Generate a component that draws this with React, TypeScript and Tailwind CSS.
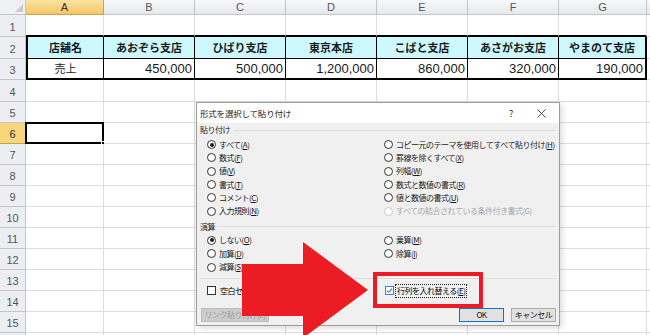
import type { ReactNode } from 'react';

const COLS: [string, number][] = [
  ['A', 78],
  ['B', 91],
  ['C', 91],
  ['D', 91],
  ['E', 91],
  ['F', 91],
  ['G', 88],
  ['', 100]
];

const ROW_HEIGHTS = [22, 22, 21, 22, 21, 21, 21, 21, 21, 21, 21, 21, 21, 21, 21, 21];

const STORES = ['店舗名', 'あおぞら支店', 'ひばり支店', '東京本店', 'こばと支店', 'あさがお支店', 'やまのて支店'];
const SALES = ['売上', '450,000', '500,000', '1,200,000', '860,000', '320,000', '190,000'];

const JP = "font-['Noto_Sans_CJK_JP','Noto_Sans',sans-serif]";

const Radio = ({ checked, disabled }: { checked?: boolean; disabled?: boolean }) => (
  <span
    className={`w-[9px] h-[9px] shrink-0 rounded-full border bg-white flex items-center justify-center ${
      disabled ? 'border-[#c8c8c8]' : 'border-[#333]'
    }`}
  >
    {checked && <span className="w-[4px] h-[4px] rounded-full bg-[#1a1a1a]" />}
  </span>
);

const Option = ({
  children,
  checked,
  disabled
}: {
  children: ReactNode;
  checked?: boolean;
  disabled?: boolean;
}) => (
  <div className={`h-[13.3px] flex items-center gap-[3px] whitespace-nowrap ${disabled ? 'text-[#a8a8a8]' : 'text-[#1a1a1a]'}`}>
    <Radio checked={checked} disabled={disabled} />
    <span>{children}</span>
  </div>
);

const Checkbox = ({ checked }: { checked?: boolean }) => (
  <span
    className={`w-[9px] h-[9px] shrink-0 border bg-white flex items-center justify-center ${
      checked ? 'border-[#3c7fd6]' : 'border-[#333]'
    }`}
  >
    {checked && (
      <svg width="7" height="7" viewBox="0 0 10 10">
        <path d="M1.5 5.2 L4 7.6 L8.6 2.4" fill="none" stroke="#2b6fd0" strokeWidth="1.5" />
      </svg>
    )}
  </span>
);

const GroupLabel = ({ text }: { text: string }) => (
  <div className="h-[14px] flex items-center gap-[3px] text-[#1a1a1a]">
    <span>{text}</span>
    <span className="flex-1 h-px bg-[#dedede]" />
  </div>
);

const Cell = ({ row, col, width }: { row: number; col: number; width: number }) => {
  const inTable = col < 7 && (row === 1 || row === 2);
  const aboveTable = col < 7 && row === 0;
  let cls = 'border-r border-b border-[#dadcdd]';
  if (aboveTable) cls = 'border-r border-r-[#dadcdd] border-b-2 border-b-black';
  if (inTable) {
    cls = `border-black ${row === 2 ? 'border-b-2' : 'border-b'} ${col === 6 ? 'border-r-2' : 'border-r'} ${col === 0 ? 'border-l-2' : ''}`;
  }
  const bg = inTable && row === 1 ? 'bg-[#ccf8fe]' : 'bg-white';
  let content: ReactNode = null;
  if (inTable && row === 1) {
    content = <span className={`w-full text-center font-bold text-[11px] ${JP}`}>{STORES[col]}</span>;
  } else if (inTable && row === 2) {
    content =
      col === 0 ? (
        <span className={`w-full text-center text-[11px] ${JP}`}>{SALES[col]}</span>
      ) : (
        <span className="w-full text-right pr-[2px] text-[13px] font-['Liberation_Sans',Arial,sans-serif]">{SALES[col]}</span>
      );
  }
  return (
    <div className={`relative box-border shrink-0 flex items-center ${cls} ${bg}`} style={{ width }}>
      {content}
      {row === 5 && col === 0 && (
        <div className="absolute -left-px -top-px w-[79px] h-[22px] border-2 border-black">
          <span className="absolute -right-[3px] -bottom-[3px] w-[4px] h-[4px] bg-black border border-white" />
        </div>
      )}
    </div>
  );
};

const Sheet = () => (
  <div className="flex flex-col text-[#1a1a1a]">
    <div className="h-[15px] flex shrink-0">
      <div className="w-[26px] shrink-0 bg-[#eef0f3] border-r border-b border-[#c3c5c8] relative">
        <svg className="absolute right-[2px] bottom-[2px]" width="8" height="8" viewBox="0 0 8 8">
          <path d="M8 0 L8 8 L0 8 Z" fill="#c9cbce" />
        </svg>
      </div>
      {COLS.map(([name, w], i) => (
        <div
          key={i}
          className={`shrink-0 flex items-center justify-center text-[11px] font-['Liberation_Sans',Arial,sans-serif] border-r border-b ${
            name === 'A'
              ? 'bg-gradient-to-b from-[#fbe3a2] to-[#f3c766] border-[#c9a24a] text-[#333]'
              : 'bg-gradient-to-b from-[#f8f9fa] to-[#e6e8eb] border-[#c3c5c8] text-[#555]'
          }`}
          style={{ width: w }}
        >
          {name}
        </div>
      ))}
    </div>
    {ROW_HEIGHTS.map((h, r) => (
      <div key={r} className="flex shrink-0" style={{ height: h }}>
        <div
          className={`w-[26px] shrink-0 flex items-end justify-center pb-[1px] text-[11px] font-['Liberation_Sans',Arial,sans-serif] border-r border-b ${
            r === 5 ? 'bg-[#f8d67c] border-[#c9a24a] text-[#333]' : 'bg-[#eceef1] border-[#c3c5c8] text-[#555]'
          }`}
        >
          {r < 15 ? r + 1 : ''}
        </div>
        {COLS.map(([, w], c) => (
          <Cell key={c} row={r} col={c} width={w} />
        ))}
      </div>
    ))}
  </div>
);

const Dialog = () => (
  <div className={`absolute left-[196px] top-[102px] w-[364px] h-[224px] border border-[#9c9c9c] bg-[#f0f0f0] shadow-[2px_2px_6px_rgba(0,0,0,0.15)] flex flex-col text-[8px] leading-none tracking-[-0.5px] ${JP}`}>
    <div className="h-[20px] shrink-0 bg-white flex items-center pl-[3px] pr-[3px] text-[#222] text-[8.5px] tracking-[-0.2px]">
      <span className="flex-1">形式を選択して貼り付け</span>
      <span className="w-[30px] text-center text-[9px]">?</span>
      <span className="w-[30px] flex justify-center">
        <svg width="9" height="9" viewBox="0 0 9 9">
          <path d="M0.5 0.5 L8.5 8.5 M8.5 0.5 L0.5 8.5" stroke="#333" strokeWidth="0.9" />
        </svg>
      </span>
    </div>
    <div className="flex-1 flex flex-col px-[3px]">
      <GroupLabel text="貼り付け" />
      <div className="mt-px pl-[7px] grid grid-cols-[177px_1fr]">
        <div className="flex flex-col">
          <Option checked>すべて(<u>A</u>)</Option>
          <Option>数式(<u>F</u>)</Option>
          <Option>値(<u>V</u>)</Option>
          <Option>書式(<u>T</u>)</Option>
          <Option>コメント(<u>C</u>)</Option>
          <Option>入力規則(<u>N</u>)</Option>
        </div>
        <div className="flex flex-col">
          <Option>コピー元のテーマを使用してすべて貼り付け(<u>H</u>)</Option>
          <Option>罫線を除くすべて(<u>X</u>)</Option>
          <Option>列幅(<u>W</u>)</Option>
          <Option>数式と数値の書式(<u>R</u>)</Option>
          <Option>値と数値の書式(<u>U</u>)</Option>
          <Option disabled>すべての結合されている条件付き書式(G)</Option>
        </div>
      </div>
      <div className="mt-[2px]">
        <GroupLabel text="演算" />
      </div>
      <div className="pl-[7px] grid grid-cols-[177px_1fr]">
        <div className="flex flex-col">
          <Option checked>しない(<u>O</u>)</Option>
          <Option>加算(<u>D</u>)</Option>
          <Option>減算(<u>S</u>)</Option>
        </div>
        <div className="flex flex-col">
          <Option>乗算(<u>M</u>)</Option>
          <Option>除算(<u>I</u>)</Option>
        </div>
      </div>
      <div className="mt-[4px] h-px bg-[#dedede]" />
      <div className="mt-[5px] h-[14px] pl-[7px] grid grid-cols-[178px_1fr] items-center">
        <div className="flex items-center gap-[4px]">
          <Checkbox />
          <span>空白セルを無視する(<u>B</u>)</span>
        </div>
        <div className="flex items-center gap-[1px]">
          <Checkbox checked />
          <span className="border border-dotted border-[#222] px-px py-[2px]">行列を入れ替える(<u>E</u>)</span>
        </div>
      </div>
      <div className="mt-[10px] h-[14px] flex items-stretch">
        <div className="ml-px w-[68px] border border-[#bcbcbc] bg-[#cccccc] text-[#9d9d9d] flex items-center justify-center">
          リンク貼り付け(L)
        </div>
        <div className="flex-1" />
        <div className="w-[45px] border border-[#0a74d6] bg-[#e1e1e1] flex items-center justify-center text-[#111]">
          OK
        </div>
        <div className="ml-[7px] w-[45px] border border-[#adadad] bg-[#e1e1e1] flex items-center justify-center text-[#111]">
          キャンセル
        </div>
      </div>
    </div>
  </div>
);

const App = () => (
  <div className="relative w-[650px] h-[335px] overflow-hidden bg-white">
    <Sheet />
    <Dialog />
    <svg className="absolute left-[242px] top-[242px]" width="126" height="96" viewBox="0 0 126 96">
      <polygon points="0,22 61,22 61,0 126,48 61,96 61,74 0,74" fill="#ec1c24" />
    </svg>
    <div className="absolute left-[373px] top-[272px] w-[110px] h-[36px] border-4 border-[#ec1c24]" />
  </div>
);

export default App;
